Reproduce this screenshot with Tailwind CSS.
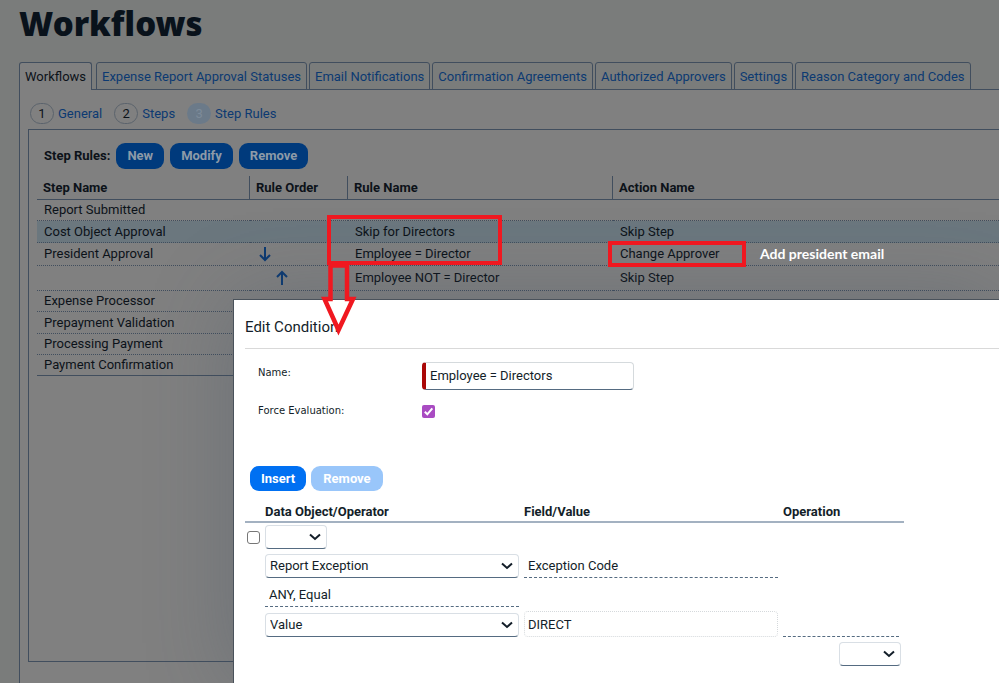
<!DOCTYPE html>
<html lang="en">
<head>
    <meta charset="UTF-8">
    <title>Workflows</title>
    <script src="https://cdn.jsdelivr.net/npm/@tailwindcss/browser@4"></script>
</head>
<body class="relative h-screen overflow-hidden bg-[#7a7c7b] font-[Roboto,sans-serif] text-[13px] leading-4 text-[#0c1219]">
    <div class="flex h-full flex-col pl-[19px]">
        <h1 class="pt-1 font-['Noto_Sans',sans-serif] text-[33px] leading-10 font-black text-[#09121b]">Workflows</h1>

        <!-- Tabs -->
        <nav class="relative z-10 mt-[18px] -mb-px flex h-7 shrink-0 items-stretch gap-[2px] whitespace-nowrap text-[#0c3a72]">
            <a href="#" class="mr-[2px] rounded-t-[3px] border border-b-0 border-[#414e5e] bg-[#808080] px-[5px] pt-[6px] text-[#0c1219]">Workflows</a>
            <a href="#" class="rounded-t-[3px] border border-[#414e5e] px-[5px] pt-[6px]">Expense Report Approval Statuses</a>
            <a href="#" class="rounded-t-[3px] border border-[#414e5e] px-[5px] pt-[6px]">Email Notifications</a>
            <a href="#" class="rounded-t-[3px] border border-[#414e5e] px-[5px] pt-[6px]">Confirmation Agreements</a>
            <a href="#" class="rounded-t-[3px] border border-[#414e5e] px-[5px] pt-[6px]">Authorized Approvers</a>
            <a href="#" class="rounded-t-[3px] border border-[#414e5e] px-[5px] pt-[6px]">Settings</a>
            <a href="#" class="rounded-t-[3px] border border-[#414e5e] px-[5px] pt-[6px]">Reason Category and Codes</a>
        </nav>

        <main class="flex grow flex-col border-t border-l border-[#414e5e] bg-[#808080] pt-[13px] pb-[21px] pl-2">
            <!-- Steps -->
            <div class="flex h-[21px] items-center gap-3 pl-[2px] text-[#0c3a72]">
                <a href="#" class="flex items-center gap-1"><span class="flex h-[21px] w-6 items-center justify-center rounded-full border border-[#5b636c] text-[#0c1219]">1</span>General</a>
                <a href="#" class="flex items-center gap-1"><span class="flex h-[21px] w-6 items-center justify-center rounded-full border border-[#5b636c] text-[#0c1219]">2</span>Steps</a>
                <a href="#" class="flex items-center gap-1"><span class="flex h-[21px] w-6 items-center justify-center rounded-full bg-[#6b7a89] text-[#7d8b99]">3</span>Step Rules</a>
            </div>

            <section class="mt-[5px] grow border-y border-l border-[#414e5e] pt-[13px] pl-2">
                <div class="flex items-center gap-[6px] pl-[7px] font-bold">
                    <h2>Step Rules:</h2>
                    <button class="h-[26px] rounded-[9px] bg-[#003a7c] px-[11px] text-[#8d9aa8]">New</button>
                    <button class="h-[26px] rounded-[9px] bg-[#003a7c] px-[11px] text-[#8d9aa8]">Modify</button>
                    <button class="h-[26px] rounded-[9px] bg-[#003a7c] px-[11px] text-[#8d9aa8]">Remove</button>
                </div>

                <table class="mt-[7px] w-full table-fixed border-separate border-spacing-0 text-left">
                    <thead>
                        <tr class="h-6 *:border-b *:border-[#414e5e] *:pl-[6px]">
                            <th class="w-[213px] border-r">Step Name</th>
                            <th class="w-[98px] border-r">Rule Order</th>
                            <th class="w-[265px] border-r">Rule Name</th>
                            <th>Action Name</th>
                        </tr>
                    </thead>
                    <tbody class="[&_td]:border-b [&_td]:border-dotted [&_td]:border-[#414e5e] [&_td]:pl-[7px]">
                        <tr class="h-[21px]"><td>Report Submitted</td><td></td><td></td><td></td></tr>
                        <tr class="h-[22px] bg-[#6b777e]"><td>Cost Object Approval</td><td></td><td>Skip for Directors</td><td>Skip Step</td></tr>
                        <tr class="h-[23px]">
                            <td>President Approval</td>
                            <td><svg class="ml-[2px] h-4 w-3" viewBox="0 0 12 16" fill="none" stroke="#0c3a72" stroke-width="2"><path d="M6 1v13M1 9l5 5 5-5"/></svg></td>
                            <td>Employee = Director</td>
                            <td>Change Approver</td>
                        </tr>
                        <tr class="h-[25px]">
                            <td></td>
                            <td><svg class="ml-[19px] h-4 w-3" viewBox="0 0 12 16" fill="none" stroke="#0c3a72" stroke-width="2"><path d="M6 15V2M1 7l5-5 5 5"/></svg></td>
                            <td>Employee NOT = Director</td>
                            <td>Skip Step</td>
                        </tr>
                        <tr class="h-[21px]"><td>Expense Processor</td><td></td><td></td><td></td></tr>
                        <tr class="h-[22px]"><td>Prepayment Validation</td><td></td><td></td><td></td></tr>
                        <tr class="h-[21px]"><td>Processing Payment</td><td></td><td></td><td></td></tr>
                        <tr class="h-[21px] [&_td]:border-solid!"><td>Payment Confirmation</td><td></td><td></td><td></td></tr>
                    </tbody>
                </table>
            </section>
        </main>
    </div>

    <!-- Edit Condition dialog -->
    <div role="dialog" aria-labelledby="dialog-title" class="absolute top-[299px] right-0 bottom-0 left-[233px] z-20 border-t border-l border-[#4a525b] bg-white pl-[11px] text-[#131e29] shadow-[0_0_80px_rgba(60,75,95,0.3)]">
        <h2 id="dialog-title" class="border-b border-[#d9d9d9] pt-[18px] pb-[11px] text-[15px] leading-[19px]">Edit Condition</h2>

        <div class="grid grid-cols-[164px_212px] items-start gap-y-[15px] pt-[13px] pl-[13px]">
            <label for="name" class="pt-[3px] font-['DejaVu_Sans',sans-serif] text-[10px]">Name:</label>
            <input id="name" type="text" value="Employee = Directors" class="h-7 rounded-[4px] border border-l-4 border-[#d5dadd] border-b-[#556b81] border-l-[#aa0808] px-1 pb-[2px]">
            <label for="force" class="-mt-[2px] font-['DejaVu_Sans',sans-serif] text-[10px]">Force Evaluation:</label>
            <span class="relative size-[13px]">
                <input id="force" type="checkbox" checked class="block size-[13px] appearance-none rounded-[2px] bg-[#a94bc2]">
                <svg class="pointer-events-none absolute inset-0" viewBox="0 0 13 13" fill="none" stroke="#fff" stroke-width="2"><path d="M2.800 6.800l2.500 2.500 5-6"/></svg>
            </span>
        </div>

        <div class="mt-[47px] flex gap-[5px] pl-[5px] font-bold text-white">
            <button class="h-[25px] rounded-[9px] bg-[#0070f2] px-[11px]">Insert</button>
            <button disabled class="h-[25px] rounded-[9px] bg-[#99c6fa] px-3">Remove</button>
        </div>

        <table class="mt-3 w-[659px] table-fixed border-separate border-spacing-0 text-left">
            <thead>
                <tr class="h-5 *:border-b-2 *:border-[#a3b1c1]">
                    <th class="w-5"></th>
                    <th class="w-[259px]">Data Object/Operator</th>
                    <th class="w-[259px]">Field/Value</th>
                    <th>Operation</th>
                </tr>
            </thead>
            <tbody class="[&_td]:align-bottom">
                <tr class="h-[26px]">
                    <td><input type="checkbox" aria-label="Select condition" class="mb-[5px] ml-[2px] block size-[13px] appearance-none rounded-[3px] border border-[#767676]"></td>
                    <td>
                        <div class="relative w-[62px]">
                            <select aria-label="Opening bracket" class="block h-6 w-full appearance-none rounded-[4px] border border-[#d9dfe5] border-b-[#556b81]"><option></option></select>
                            <svg class="pointer-events-none absolute top-2 right-[6px] h-2 w-3" viewBox="0 0 12 8" fill="none" stroke="#131e29" stroke-width="2"><path d="M1 1.500l5 4.500 5-4.500"/></svg>
                        </div>
                    </td>
                    <td></td>
                    <td></td>
                </tr>
                <tr class="h-[29px]">
                    <td></td>
                    <td>
                        <div class="relative w-[254px]">
                            <select aria-label="Data object" class="block h-6 w-full appearance-none rounded-[4px] border border-[#d9dfe5] border-b-[#556b81] px-1"><option>Report Exception</option></select>
                            <svg class="pointer-events-none absolute top-2 right-[6px] h-2 w-3" viewBox="0 0 12 8" fill="none" stroke="#131e29" stroke-width="2"><path d="M1 1.500l5 4.500 5-4.500"/></svg>
                        </div>
                    </td>
                    <td><div class="h-6 w-[254px] border-b border-dashed border-[#556b81] pt-1 pl-1">Exception Code</div></td>
                    <td></td>
                </tr>
                <tr class="h-[29px]">
                    <td></td>
                    <td><div class="h-6 w-[254px] border-b border-dashed border-[#556b81] pt-1 pl-1">ANY, Equal</div></td>
                    <td></td>
                    <td></td>
                </tr>
                <tr class="h-[30px]">
                    <td></td>
                    <td>
                        <div class="relative w-[254px]">
                            <select aria-label="Value type" class="block h-6 w-full appearance-none rounded-[4px] border border-[#d9dfe5] border-b-[#556b81] px-1"><option>Value</option></select>
                            <svg class="pointer-events-none absolute top-2 right-[6px] h-2 w-3" viewBox="0 0 12 8" fill="none" stroke="#131e29" stroke-width="2"><path d="M1 1.500l5 4.500 5-4.500"/></svg>
                        </div>
                    </td>
                    <td><input type="text" aria-label="Value" value="DIRECT" class="block h-[26px] w-[254px] rounded-[4px] border border-dotted border-[#d5d9dc] px-[3px]"></td>
                    <td><div class="w-[116px] border-b border-dashed border-[#556b81]"></div></td>
                </tr>
                <tr class="h-[29px]">
                    <td></td>
                    <td></td>
                    <td></td>
                    <td>
                        <div class="relative mr-[3px] ml-auto w-[62px]">
                            <select aria-label="Closing bracket" class="block h-6 w-full appearance-none rounded-[4px] border border-[#d9dfe5] border-b-[#556b81]"><option></option></select>
                            <svg class="pointer-events-none absolute top-2 right-[6px] h-2 w-3" viewBox="0 0 12 8" fill="none" stroke="#131e29" stroke-width="2"><path d="M1 1.500l5 4.500 5-4.500"/></svg>
                        </div>
                    </td>
                </tr>
            </tbody>
        </table>
    </div>

    <!-- Markup drawn over the page -->
    <div class="pointer-events-none absolute top-[215px] left-[327px] z-30 h-[50px] w-[175px] border-4 border-[#f01820]"></div>
    <div class="pointer-events-none absolute top-[241px] left-[608px] z-30 h-[26px] w-[138px] border-4 border-[#f01820]"></div>
    <svg class="pointer-events-none absolute top-[263px] left-[320px] z-30 h-[74px] w-[38px]" viewBox="0 0 38 74" fill="none" stroke="#f01820" stroke-width="4.500"><path d="M10.500 2.500H27V36H33L18.500 67L4.500 36H10.500Z"/></svg>
    <p class="absolute top-[246px] left-[760px] z-30 font-[Lato,sans-serif] text-[14px] font-bold text-white">Add president email</p>
</body>
</html>
